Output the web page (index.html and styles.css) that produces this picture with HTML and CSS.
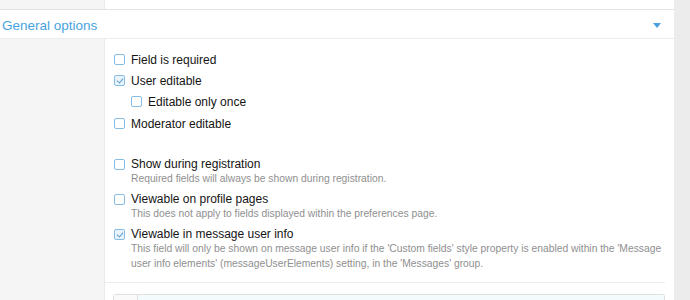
FILE: index.html
```html
<!DOCTYPE html>
<html lang="en">
<head>
    <meta charset="UTF-8">
    <title>General options</title>
    <link rel="stylesheet" href="styles.css">
</head>
<body>
    <div class="page">
        <div class="block-top">
            <div class="side"></div>
            <div class="main"></div>
        </div>

        <h3 class="block-header">
            <span>General options</span>
            <span class="toggle"></span>
        </h3>

        <div class="block-body">
            <div class="side"></div>
            <div class="main">
                <ul class="options">
                    <li class="option">
                        <label><span class="box"></span>Field is required</label>
                    </li>
                    <li class="option">
                        <label><span class="box checked"></span>User editable</label>
                        <ul class="options sub">
                            <li class="option">
                                <label><span class="box"></span>Editable only once</label>
                            </li>
                        </ul>
                    </li>
                    <li class="option">
                        <label><span class="box"></span>Moderator editable</label>
                    </li>
                </ul>

                <ul class="options spaced">
                    <li class="option">
                        <label><span class="box"></span>Show during registration</label>
                        <p class="hint">Required fields will always be shown during registration.</p>
                    </li>
                    <li class="option">
                        <label><span class="box"></span>Viewable on profile pages</label>
                        <p class="hint">This does not apply to fields displayed within the preferences page.</p>
                    </li>
                    <li class="option">
                        <label><span class="box checked"></span>Viewable in message user info</label>
                        <p class="hint">This field will only be shown on message user info if the 'Custom fields' style property is enabled within the 'Message user info elements' (messageUserElements) setting, in the 'Messages' group.</p>
                    </li>
                </ul>

                <hr class="sep">

                <div class="input-row">
                    <div class="addon"></div>
                    <div class="input"></div>
                </div>
            </div>
        </div>
    </div>
</body>
</html>
```

FILE: styles.css
```css
* {
    margin: 0;
    padding: 0;
    box-sizing: border-box;
}

body {
    font-family: 'Liberation Sans', Arial, sans-serif;
    background: #ececec;
    color: #141414;
    height: 300px;
    overflow: hidden;
}

.page {
    width: 674px;
    background: #fff;
}

.block-top {
    display: flex;
    height: 10px;
    border-bottom: 1px solid #e3e3e3;
}

.side {
    width: 105px;
    flex-shrink: 0;
    background: #f5f5f5;
    border-right: 1px solid #ebebeb;
}

.main {
    flex: 1;
}

.block-header {
    display: flex;
    align-items: center;
    justify-content: space-between;
    height: 29px;
    padding: 2px 13px 0 2px;
    font-size: 13.5px;
    font-weight: normal;
    color: #47a3e0;
    border-bottom: 1px solid #ededed;
}

.toggle {
    width: 0;
    height: 0;
    border-left: 4.5px solid transparent;
    border-right: 4.5px solid transparent;
    border-top: 5px solid #4a9fdc;
}

.block-body {
    display: flex;
}

.block-body .main {
    padding: 10px 9px 0 0;
}

.options {
    list-style: none;
    padding-left: 9px;
}

.options.sub {
    padding-left: 17px;
    margin-bottom: 1px;
}

.options.spaced {
    margin-top: 21px;
}

.option label {
    display: flex;
    align-items: center;
    height: 21px;
    font-size: 12px;
}

.spaced .option label {
    height: 18px;
}

.spaced .option {
    margin-bottom: 2px;
}

.box {
    width: 11px;
    height: 11px;
    border: 1px solid #86bde6;
    border-radius: 2px;
    background: #fff;
    margin-right: 6px;
    position: relative;
}

.box.checked {
    background: #eaf3fb;
}

.box.checked::after {
    content: '';
    position: absolute;
    left: 3px;
    top: 1px;
    width: 3px;
    height: 5px;
    border-right: 1.5px solid #5a9fd4;
    border-bottom: 1.5px solid #5a9fd4;
    transform: rotate(40deg);
}

.hint {
    font-size: 10.3px;
    line-height: 15px;
    color: #8f8f8f;
    padding-left: 17px;
    margin-top: -2px;
    padding-bottom: 2px;
}

.sep {
    border: 0;
    border-top: 1px solid #ececec;
    margin: 9px 0 0 -1px;
}

.input-row {
    display: flex;
    height: 20px;
    margin: 11px 0 0 8px;
    border: 1px solid #e0e0e0;
    border-bottom: 0;
    border-radius: 3px 3px 0 0;
}

.addon {
    width: 24px;
    background: #fafafa;
    border-right: 1px solid #e0e0e0;
}

.input {
    flex: 1;
    background: #f4fbfc;
}
```
